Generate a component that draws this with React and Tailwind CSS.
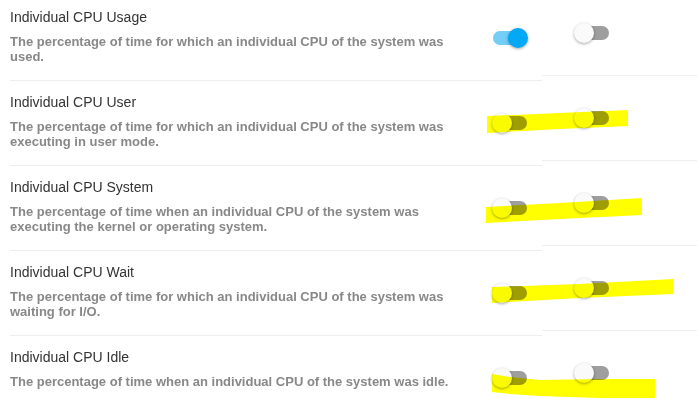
const ROWS = [
  {
    title: 'Individual CPU Usage',
    desc: 'The percentage of time for which an individual CPU of the system was used.',
    on: true,
  },
  {
    title: 'Individual CPU User',
    desc: 'The percentage of time for which an individual CPU of the system was executing in user mode.',
  },
  {
    title: 'Individual CPU System',
    desc: 'The percentage of time when an individual CPU of the system was executing the kernel or operating system.',
  },
  {
    title: 'Individual CPU Wait',
    desc: 'The percentage of time for which an individual CPU of the system was waiting for I/O.',
  },
  {
    title: 'Individual CPU Idle',
    desc: 'The percentage of time when an individual CPU of the system was idle.',
  },
]

function Switch({ on }) {
  return (
    <div className={`relative w-[34px] h-[14px] rounded-full ${on ? 'bg-[#74cdf5]' : 'bg-[#9e9e9e]'}`}>
      <div
        className={`absolute top-[-3px] w-5 h-5 rounded-full shadow-[0_1px_3px_rgba(0,0,0,0.35)] ${
          on ? 'left-[15px] bg-[#03a9f4]' : 'left-[-1px] bg-[#fafafa]'
        }`}
      />
    </div>
  )
}

// highlighter strokes drawn over the toggles
function Marks() {
  return (
    <svg className="absolute inset-0 mix-blend-multiply pointer-events-none" width="697" height="414">
      <g fill="#ffff00">
        <polygon points="487,116 560,113 628,110 628,126 560,129 487,133" />
        <polygon points="486,207 560,203 642,198 642,215 560,219 486,223" />
        <polygon points="492,287 580,284 673,279 673,294 580,298 492,303" />
        <polygon points="492,374 510,377 540,380 600,379 655,379 655,398 600,398 540,396 510,394 492,392" />
      </g>
    </svg>
  )
}

export default function App() {
  return (
    <div className="relative w-[697px] h-[414px] overflow-hidden bg-white font-['Liberation_Sans',Arial,sans-serif]">
      <div className="flex">
        <div className="w-[542px] pl-[10px] -mt-1">
          {ROWS.map((r) => (
            <div key={r.title} className="h-[85px] flex border-b border-[#eeeeee]">
              <div className="w-[450px] pt-[13px]">
                <div className="text-[14px] leading-[17px] text-[#333]">{r.title}</div>
                <div className="mt-[8px] text-[13px] leading-[15px] font-bold text-[#888]">{r.desc}</div>
              </div>
              <div className="flex-1 flex items-center pl-[33px]">
                <Switch on={r.on} />
              </div>
            </div>
          ))}
        </div>
        <div className="flex-1 -mt-[9px]">
          {ROWS.map((r) => (
            <div key={r.title} className="h-[85px] pl-[33px] flex items-center border-b border-[#eeeeee]">
              <Switch />
            </div>
          ))}
        </div>
      </div>
      <Marks />
    </div>
  )
}
